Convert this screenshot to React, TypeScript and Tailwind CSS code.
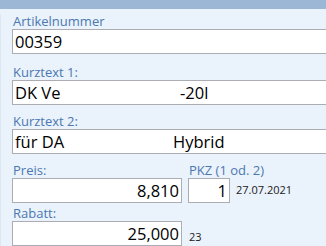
import React from 'react';

function Label({ children }: { children: React.ReactNode }) {
  return <div className="text-[13px] leading-[16px] text-[#4a78b0] pl-[1px] whitespace-nowrap">{children}</div>;
}

function Box({ children, className = '' }: { children?: React.ReactNode; className?: string }) {
  return (
    <div
      className={`h-[25px] border border-[#abadb3] bg-white text-[16.5px] leading-[23px] text-black px-[2px] whitespace-nowrap overflow-hidden ${className}`}
    >
      {children}
    </div>
  );
}

export default function App() {
  return (
    <div className="w-[326px] h-[246px] overflow-hidden bg-[#eaf2fb] font-['Open_Sans',sans-serif] flex">
      <div className="w-[5px] bg-[#eef4fb] border-r border-[#dde7f2] mt-[14px]" />
      <div className="flex-1 flex flex-col">
        <div className="h-[14px] bg-[#9cb7d5] -ml-[5px]" />
        <div className="pl-[11px] flex flex-col">
          <div className="mt-[4px]">
            <Label>Artikelnummer</Label>
            <Box className="w-[330px]">00359</Box>
          </div>

          <div className="mt-[10px]">
            <Label>Kurztext 1:</Label>
            <Box className="w-[330px] flex">
              <span className="w-[165px] shrink-0">DK Ve</span>
              <span>-20l</span>
            </Box>
          </div>

          <div className="mt-[8px]">
            <Label>Kurztext 2:</Label>
            <Box className="w-[330px] flex">
              <span className="w-[158px] shrink-0">für DA</span>
              <span>Hybrid</span>
            </Box>
          </div>

          <div className="mt-[8px] flex gap-[6px]">
            <div className="w-[170px]">
              <Label>Preis:</Label>
              <Box className="text-right">8,810</Box>
            </div>
            <div className="w-[42px]">
              <Label>PKZ (1 od. 2)</Label>
              <Box className="text-right">1</Box>
            </div>
            <div className="self-end h-[25px] flex items-center text-[11px] text-[#1a1a1a] whitespace-nowrap">
              27.07.2021
            </div>
          </div>

          <div className="mt-[2px] flex gap-[7px]">
            <div className="w-[170px]">
              <Label>Rabatt:</Label>
              <Box className="text-right">25,000</Box>
            </div>
            <div className="self-end h-[25px] flex items-end pb-[1px] text-[11px] text-[#1a1a1a]">23</div>
          </div>
        </div>
      </div>
    </div>
  );
}
